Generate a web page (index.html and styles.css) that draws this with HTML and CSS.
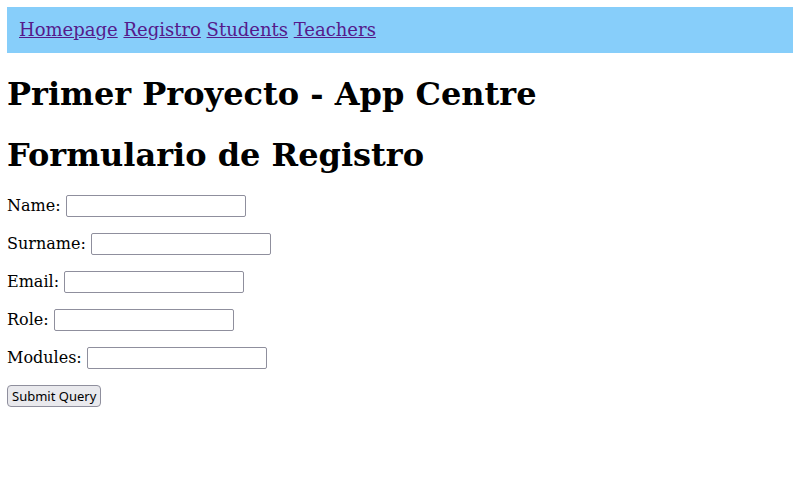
FILE: index.html
```html
<!DOCTYPE html>
<html lang="es">
<head>
<meta charset="utf-8">
<title>Registro</title>
<link rel="stylesheet" href="styles.css">
</head>
<body>
<nav class="topnav">
  <a href="#">Homepage</a>
  <a href="#">Registro</a>
  <a href="#">Students</a>
  <a href="#">Teachers</a>
</nav>
<h1 class="title">Primer Proyecto - App Centre</h1>
<h1 class="title">Formulario de Registro</h1>
<form class="reg">
  <p class="row">Name: <input class="field" type="text" name="name"></p>
  <p class="row">Surname: <input class="field" type="text" name="surname"></p>
  <p class="row">Email: <input class="field" type="text" name="email"></p>
  <p class="row">Role: <input class="field" type="text" name="role"></p>
  <p class="row">Modules: <input class="field" type="text" name="modules"></p>
  <input class="submit" type="submit" value="Submit Query">
</form>
</body>
</html>
```
FILE: styles.css
```css
body {
  margin: 7px 0 0 7px;
  font-family: "DejaVu Serif", serif;
  font-size: 16px;
  color: #000;
}
.topnav {
  background: #87cefa;
  padding: 12px;
  font-size: 18px;
  line-height: 22px;
}
.topnav a {
  color: #551a8b;
}
.title {
  font-size: 32px;
  line-height: 40px;
  margin: 21px 0 20px;
}
.row {
  margin: 16px 0;
  line-height: 22px;
  height: 22px;
}
.field {
  box-sizing: border-box;
  width: 180px;
  height: 22px;
  border: 1px solid #8f8f9d;
  border-radius: 2px;
  padding: 1px 2px;
  background: #fff;
  vertical-align: top;
  font: 13px "Noto Sans", sans-serif;
}
.submit {
  font: 13px "Noto Sans", sans-serif;
  color: #000;
  background: #e9e9ed;
  border: 1px solid #8f8f9d;
  border-radius: 4px;
  padding: 1px 4px;
  height: 22px;
  margin: 0;
}
```
